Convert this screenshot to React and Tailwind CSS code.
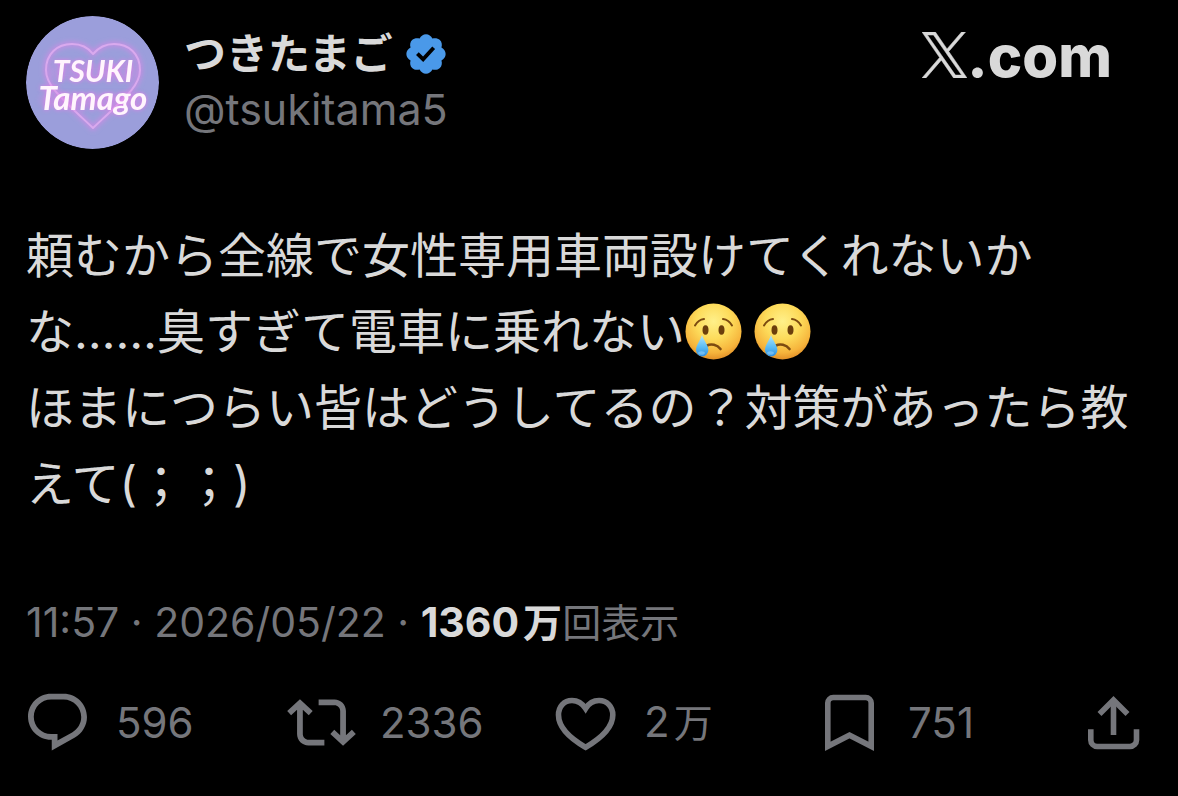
import React from "react";

const FONT = "font-['Inter','Noto_Sans_CJK_JP',sans-serif]";

function Avatar() {
  return (
    <svg viewBox="0 0 133 133" className="size-[133px] shrink-0 rounded-full" role="img" aria-label="つきたまご">
      <defs>
        <filter id="glow" x="-30%" y="-30%" width="160%" height="160%">
          <feGaussianBlur stdDeviation="2.4" />
        </filter>
      </defs>
      <circle cx="66.5" cy="66.5" r="66.5" fill="#9b9edb" />
      <g fill="none" strokeLinejoin="round">
        <path d="M67 38C61 30 53 28 46 28C31 28 20 38 20 54C20 69 32 79 67 112C102 79 114 69 114 54C114 38 103 28 88 28C80 28 73 31 67 38Z" stroke="#cf8be4" strokeWidth="4" filter="url(#glow)" />
        <path d="M67 38C61 30 53 28 46 28C31 28 20 38 20 54C20 69 32 79 67 112C102 79 114 69 114 54C114 38 103 28 88 28C80 28 73 31 67 38Z" stroke="#d9aaee" strokeWidth="2" />
        <path d="M28 56H106M20 84H112" stroke="#d48ce6" strokeWidth="14" strokeLinecap="round" opacity="0.3" filter="url(#glow)" />
      </g>
      <g className="font-['Lato',sans-serif] font-bold italic drop-shadow-[0_0_2px_#e07fe6]" textAnchor="middle" fill="#fff5fd">
        <text x="67" y="66" fontSize="30">TSUKI</text>
        <text x="67" y="94" fontSize="33">Tamago</text>
      </g>
    </svg>
  );
}

function Verified() {
  return (
    <svg viewBox="0 0 24 24" className="size-[46px] shrink-0 fill-[#4a99e9]" role="img" aria-label="認証済み">
      <path d="M22.25 12c0-1.43-.88-2.67-2.19-3.34.46-1.39.2-2.9-.81-3.91s-2.52-1.27-3.91-.81c-.66-1.31-1.91-2.19-3.34-2.19s-2.67.88-3.33 2.19c-1.4-.46-2.91-.2-3.92.81s-1.26 2.52-.8 3.91c-1.31.67-2.2 1.91-2.2 3.34s.89 2.67 2.2 3.34c-.46 1.39-.21 2.9.8 3.91s2.52 1.26 3.91.81c.67 1.31 1.91 2.19 3.34 2.19s2.68-.88 3.34-2.19c1.39.45 2.9.2 3.91-.81s1.27-2.52.81-3.91c1.31-.67 2.19-1.91 2.19-3.34zm-11.71 4.2L6.8 12.46l1.41-1.42 2.26 2.26 4.8-5.23 1.47 1.36-6.2 6.77z" />
    </svg>
  );
}

function XLogo() {
  return (
    <svg viewBox="0 0 1200 1227" className="h-[46px] w-[45px] fill-[#d9d9d9] stroke-[#d9d9d9]" strokeWidth="14" role="img" aria-label="X">
      <path d="M714.163 519.284L1160.89 0H1055.03L667.137 450.887L357.328 0H0L468.492 681.821L0 1226.37H105.866L515.491 750.218L842.672 1226.37H1200L714.137 519.284H714.163ZM569.165 687.828L521.697 619.934L144.011 79.6944H306.615L611.412 515.685L658.88 583.579L1055.08 1150.3H892.476L569.165 687.854V687.828Z" />
    </svg>
  );
}

function CryingFace() {
  return (
    <svg viewBox="0 0 57 57" className="mr-3 inline-block size-[57px] align-[-11px]" role="img" aria-label="泣き顔">
      <defs>
        <radialGradient id="face" cx="0.5" cy="0.32" r="0.7">
          <stop offset="0" stopColor="#fff08a" />
          <stop offset="0.45" stopColor="#fddb5a" />
          <stop offset="0.8" stopColor="#f6b43c" />
          <stop offset="1" stopColor="#e08a24" />
        </radialGradient>
        <linearGradient id="tear" x1="0" y1="0" x2="0" y2="1">
          <stop offset="0" stopColor="#b4e6fb" />
          <stop offset="0.55" stopColor="#5dbdf3" />
          <stop offset="1" stopColor="#2f8fe0" />
        </linearGradient>
      </defs>
      <circle cx="28.5" cy="28.5" r="28" fill="url(#face)" />
      <ellipse cx="20.5" cy="27" rx="3" ry="4.8" fill="#6b3e0c" />
      <ellipse cx="36.5" cy="27" rx="3" ry="4.8" fill="#6b3e0c" />
      <g fill="none" stroke="#7c4a10" strokeWidth="2" strokeLinecap="round">
        <path d="M10 22.5C12 19 15 16.5 19 16" />
        <path d="M38 16C42 16.5 45 19 47 22.5" />
        <path d="M22 42.5C26 40.5 32 41.5 35.5 46" strokeWidth="2.6" />
      </g>
      <path d="M17 32C15 38 11 42 11 47A6.2 6.5 0 0 0 23.4 47C23.4 42 19 38 17 32Z" fill="url(#tear)" />
      <ellipse cx="16.5" cy="50" rx="3.4" ry="1.8" fill="#9fdcff" opacity="0.5" />
    </svg>
  );
}

function Icon({ children }) {
  return (
    <svg viewBox="0 0 69 69" className="size-[69px] shrink-0" fill="none" stroke="currentColor" strokeWidth="5.6" aria-hidden="true">
      {children}
    </svg>
  );
}

const ICONS = {
  reply: (
    <path transform="scale(2.875)" fill="currentColor" stroke="none" d="M1.751 10c0-4.42 3.584-8 8.005-8h4.366c4.49 0 8.129 3.64 8.129 8.13 0 2.96-1.607 5.68-4.196 7.11l-8.054 4.46v-3.69h-.067c-4.49.1-8.183-3.51-8.183-8.01zm8.005-6c-3.317 0-6.005 2.69-6.005 6 0 3.37 2.77 6.08 6.138 6.01l.351-.01h1.761v2.3l5.087-2.81c1.951-1.08 3.163-3.13 3.163-5.36 0-3.39-2.744-6.13-6.129-6.13H9.756z" />
  ),
  repost: (
    <path transform="scale(2.875)" fill="currentColor" stroke="none" d="M4.5 3.88l4.432 4.14-1.364 1.46L5.5 7.55V16c0 1.1.896 2 2 2H13v2H7.5c-2.209 0-4-1.79-4-4V7.55L1.432 9.48.068 8.02 4.5 3.88zM16.5 6H11V4h5.5c2.209 0 4 1.79 4 4v8.45l2.068-1.93 1.364 1.46-4.432 4.14-4.432-4.14 1.364-1.46 2.068 1.93V8c0-1.1-.896-2-2-2z" />
  ),
  like: (
    <path d="M34.6 20.5C31 15 26 12.5 21 12.5C13 12.5 7.5 18.5 7.5 27C7.5 40 18.5 50 34.6 59.3C50.5 50 61.8 40 61.8 27C61.8 18.5 56 12.5 48 12.5C43 12.5 38 15 34.6 20.5Z" />
  ),
  bookmark: (
    <path d="M12.8 58.3V15a5.5 5.5 0 0 1 5.5-5.5h32.4a5.5 5.5 0 0 1 5.5 5.5V58.3L34.5 47.2Z" />
  ),
  share: (
    <>
      <path d="M34.5 47V12" />
      <path d="M20.5 26L34.5 12L48.5 26" />
      <path d="M11.8 41.3V52a6.5 6.5 0 0 0 6.5 6.5h32.7a6.5 6.5 0 0 0 6.5-6.5V41.3" />
    </>
  ),
};

const ACTIONS = [
  { icon: "reply", label: "返信", count: "596" },
  { icon: "repost", label: "リポスト", count: "2336" },
  { icon: "like", label: "いいね", count: "2", unit: "万" },
  { icon: "bookmark", label: "ブックマーク", count: "751" },
];

export default function App() {
  return (
    <main lang="ja" className={`min-h-screen bg-black pt-4 pb-9 text-[#d9d9d9] ${FONT}`}>
      <article>
        <header className="flex items-start px-[26px]">
          <Avatar />
          <div className="ml-[25px] pt-[10px]">
            <div className="flex items-center gap-[10px]">
              <h1 className="text-[42px] leading-[56px] font-bold">つきたまご</h1>
              <Verified />
            </div>
            <a href="#profile" className="block text-[43px] leading-[54px] text-[#75767b]">@tsukitama5</a>
          </div>
          <div className="mr-10 ml-auto flex items-end pt-4">
            <XLogo />
            <span className="text-[58px] leading-[44px] font-extrabold">.com</span>
          </div>
        </header>

        <p className="mt-[69px] px-[26px] text-[48px] leading-[76px]">
          頼むから全線で女性専用車両設けてくれないかな……臭すぎて電車に乗れない<CryingFace /><CryingFace />
          <br />
          ほまにつらい皆はどうしてるの？対策があったら教えて(；；)
        </p>

        <p className="mt-[76px] px-[26px] text-[41px] leading-[48px] text-[#75767b]">
          <time dateTime="2026-05-22T11:57">11:57 · 2026/05/22</time> · <strong className="text-[#d9d9d9]">1360<span className="ml-1 text-[39px]">万</span></strong><span className="text-[39px]">回表示</span>
        </p>

        <div className="mt-[41px] flex pr-[30px] pl-[23px] text-[#75767b]">
          {ACTIONS.map((a) => (
            <div key={a.icon} className="min-w-0 flex-1">
              <button type="button" aria-label={`${a.label} ${a.count}${a.unit ?? ""}`} className="flex items-center gap-6 text-[42px] leading-[48px]">
                <Icon>{ICONS[a.icon]}</Icon>
                <span>
                  {a.count}
                  {a.unit && <span className="ml-1 text-[39px]">{a.unit}</span>}
                </span>
              </button>
            </div>
          ))}
          <button type="button" aria-label="共有">
            <Icon>{ICONS.share}</Icon>
          </button>
        </div>
      </article>
    </main>
  );
}
